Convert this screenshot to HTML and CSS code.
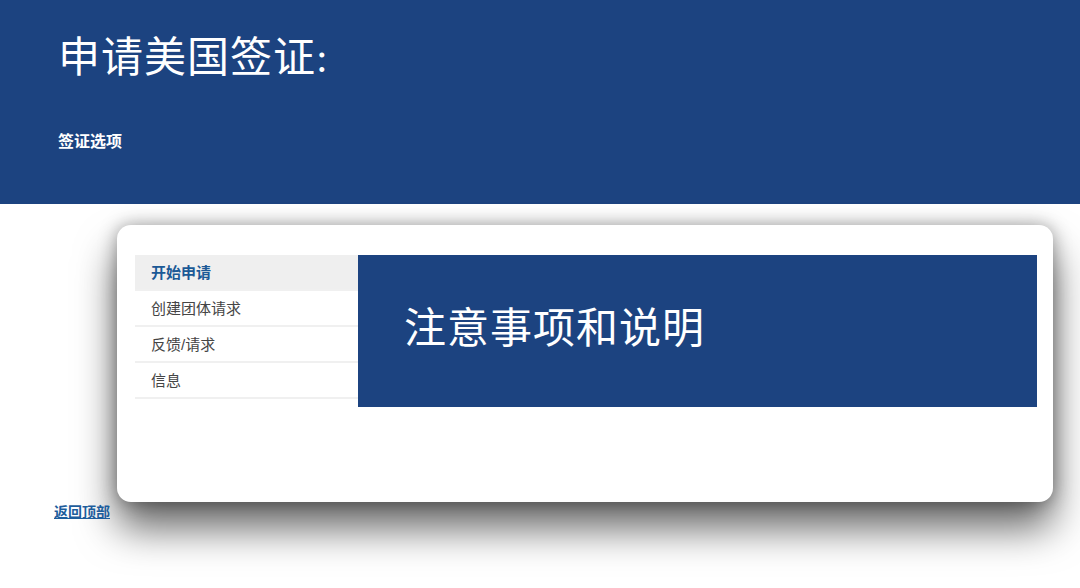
FILE: index.html
```html
<!DOCTYPE html>
<html lang="zh-CN">
<head>
<meta charset="utf-8">
<title>申请美国签证</title>
<link rel="stylesheet" href="styles.css">
</head>
<body>
<header class="hero">
  <h1 class="hero-title">申请美国签证:</h1>
  <p class="hero-sub">签证选项</p>
</header>
<main class="page">
  <section class="card">
    <nav class="side">
      <a class="side-item active">开始申请</a>
      <a class="side-item">创建团体请求</a>
      <a class="side-item">反馈/请求</a>
      <a class="side-item">信息</a>
    </nav>
    <div class="panel">
      <h2 class="panel-title">注意事项和说明</h2>
    </div>
  </section>
  <a class="top-link" href="#">返回顶部</a>
</main>
</body>
</html>
```
FILE: styles.css
```css
html, body {
  margin: 0;
  padding: 0;
  background: #ffffff;
  font-family: "Liberation Sans", "Noto Sans CJK SC", sans-serif;
}
body {
  min-height: 588px;
}
.hero {
  background: #1c4380;
  height: 204px;
  box-sizing: border-box;
  padding: 32px 0 0 58px;
  color: #ffffff;
}
.hero-title {
  margin: 0;
  font-family: "Liberation Serif", "Noto Sans CJK SC", serif;
  font-weight: 400;
  font-size: 42px;
  line-height: 52px;
  letter-spacing: 1px;
}
.hero-sub {
  margin: 48px 0 0 0;
  font-size: 16px;
  font-weight: 700;
  line-height: 20px;
}
.page {
  padding: 21px 0 80px 0;
}
.card {
  margin-left: 117px;
  width: 936px;
  height: 277px;
  box-sizing: border-box;
  padding: 30px 16px 0 18px;
  background: #ffffff;
  border-radius: 14px;
  display: flex;
  align-items: flex-start;
  box-shadow: 0 26px 40px rgba(0, 0, 0, 0.6), 0 0 18px rgba(0, 0, 0, 0.35);
}
.side {
  width: 223px;
  display: flex;
  flex-direction: column;
}
.side-item {
  display: block;
  height: 36px;
  line-height: 36px;
  box-sizing: border-box;
  padding-left: 16px;
  border-bottom: 2px solid #f0f0f0;
  font-size: 15px;
  color: #454545;
}
.side-item.active {
  background: #efefef;
  color: #1b5996;
  font-weight: 700;
}
.panel {
  flex: 1;
  height: 152px;
  background: #1c4380;
  display: flex;
  align-items: center;
  padding-left: 46px;
  box-sizing: border-box;
}
.panel-title {
  margin: 0;
  font-family: "Liberation Serif", "Noto Sans CJK SC", serif;
  font-weight: 400;
  font-size: 42px;
  line-height: 50px;
  color: #ffffff;
  letter-spacing: 1px;
  position: relative;
  top: -2px;
}
.top-link {
  display: inline-block;
  margin: 1px 0 0 54px;
  font-size: 14px;
  font-weight: 700;
  line-height: 18px;
  color: #1d5d9c;
  text-decoration: underline;
}
```
